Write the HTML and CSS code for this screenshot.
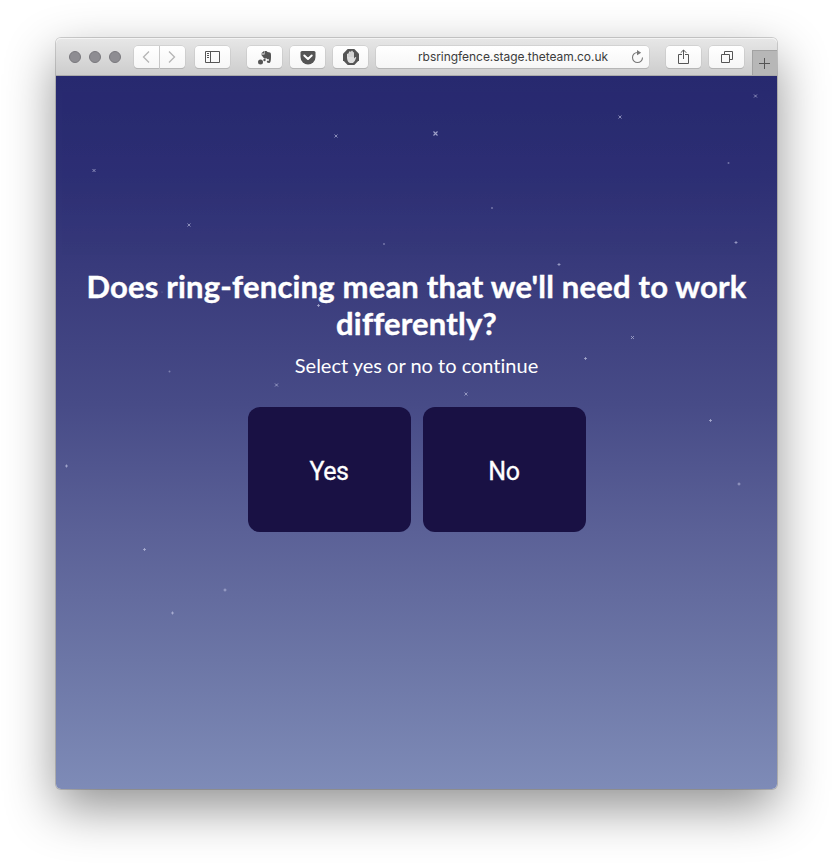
FILE: index.html
```
<!DOCTYPE html>
<html lang="en">
<head>
<meta charset="utf-8">
<title>Ring-fencing</title>
<link rel="stylesheet" href="styles.css">
</head>
<body>
<div class="window">
  <header class="toolbar">
    <div class="lights"><i></i><i></i><i></i></div>
    <div class="history">
      <span class="btn"><svg width="26" height="22" viewBox="0 0 26 22"><path d="M16 5.500 10.500 11 16 16.500" class="faint"/></svg></span>
      <span class="btn"><svg width="26" height="22" viewBox="0 0 26 22"><path d="M10 5.500 15.500 11 10 16.500" class="faint"/></svg></span>
    </div>
    <span class="btn sidebar"><svg width="36" height="22" viewBox="0 0 36 22"><path d="M10.500 5.500h14v11h-14zM15.500 5.500v11M12 7.500h2M12 9.500h2M12 11.500h2" class="line"/></svg></span>
    <div class="extensions">
      <span class="btn"><svg width="36" height="22" viewBox="0 0 36 22"><g fill="#555"><circle cx="13.500" cy="16" r="2.500"/><circle cx="17.500" cy="14" r="1.200"/><path d="M14 7.500 17 5v2.500zM17.500 5h2l1 1 2.500.5c1 .3 1 2 1 4 0 4-.3 6.500-2 6.500-1.800 0-2.500-1-2-2.300l2 .1-.3-2c-1 1-1.700.4-2-.5-1.200.4-3.200.2-3.500-1.100L14 8.500h3.500z"/></g></svg></span>
      <span class="btn"><svg width="36" height="22" viewBox="0 0 36 22"><path d="M12 5h12q1.500 0 1.500 1.500V11a7.500 7.500 0 0 1-15 0V6.500Q10.500 5 12 5z" fill="#555"/><path d="m14.300 9.500 3.700 3.500 3.700-3.500" fill="none" stroke="#fff" stroke-width="2" stroke-linecap="round" stroke-linejoin="round"/></svg></span>
      <span class="btn"><svg width="36" height="22" viewBox="0 0 36 22"><path d="M14.700 3h6.600L26 7.700v6.600L21.300 19h-6.600L10 14.300V7.700z" fill="#555"/><path d="M14 8v4q.5 4.500 3 5h3q2-1.500 3.300-5.500l-1-.5-1.300 1.500V6.200l-1 0-.5-1.400h-1L18 6l-1-.8-1 .5-.3 1.500z" fill="#ddd"/><path d="M16 7v4M18 6v5M20 6v5" stroke="#aaa" stroke-width=".4"/></svg></span>
    </div>
    <div class="btn address"><span>rbsringfence.stage.theteam.co.uk</span><svg class="reload" width="16" height="18" viewBox="0 0 16 18"><path d="M8.500 4.500A5 5 0 1 0 13.500 9.500" fill="none" stroke="#777" stroke-width="1.100"/><path d="m8 2 4.200 2.700L8 7.300z" fill="#777"/></svg></div>
    <div class="actions">
      <span class="btn"><svg width="36" height="22" viewBox="0 0 36 22"><path d="M16 8.500h-3.500v9h10v-9H19M17.500 13V4M14.700 6.800 17.500 4l2.800 2.800" class="line"/></svg></span>
      <span class="btn"><svg width="36" height="22" viewBox="0 0 36 22"><path d="M12.500 8.500h8v8h-8zM15.500 8.500v-3h8v8h-3" class="line"/></svg></span>
    </div>
    <span class="newtab"><svg width="24" height="25" viewBox="0 0 24 25"><path d="M6 12.500h11M11.500 7v11" stroke="#555"/></svg></span>
  </header>
  <main class="page">
    <svg class="sky" width="721" height="713" viewBox="56 76 721 713">
      <defs>
        <path id="x" d="M-1.500-1.500 1.500 1.500M1.500-1.500-1.500 1.500"/>
        <path id="p" d="M-1.500 0h3M0-1.500v3"/>
      </defs>
      <use href="#x" x="336" y="136"/><use href="#x" x="94" y="170.500"/><use href="#x" x="189" y="225"/>
      <use href="#x" x="620" y="117"/><use href="#x" x="755.500" y="96"/><use href="#x" x="276.500" y="385"/>
      <use href="#x" x="466" y="394"/><use href="#x" x="632.500" y="337.500"/>
      <path d="m433.500 131.500 4 4m0-4-4 4" stroke-width="1.100"/>
      <use href="#p" x="559" y="264.500"/><use href="#p" x="585.500" y="358.500"/><use href="#p" x="318.500" y="305.500"/>
      <use href="#p" x="710.500" y="420.500"/><use href="#p" x="66.500" y="466"/><use href="#p" x="739" y="484"/>
      <use href="#p" x="144.500" y="549.500"/><use href="#p" x="225" y="590"/><use href="#p" x="172.500" y="613"/>
      <use href="#p" x="736" y="242.500"/>
      <g class="dot"><circle cx="492" cy="208" r="1"/><circle cx="384" cy="244" r="1"/><circle cx="728.500" cy="163" r="1"/><circle cx="169.500" cy="371.500" r="1"/><circle cx="162" cy="292" r=".6"/></g>
    </svg>
    <h1><span class="l1">Does ring-fencing mean that we'll need to work</span> <span class="l2">differently?</span></h1>
    <p>Select yes or no to continue</p>
    <div class="choices">
      <button>Yes</button>
      <button>No</button>
    </div>
  </main>
</div>
</body>
</html>
```
FILE: styles.css
```
* { box-sizing: border-box; }
body {
  margin: 0;
  height: 863px;
  padding: 38px 56px 0;
  background: #fff;
  overflow: hidden;
}
svg { display: block; }
.window {
  width: 721px;
  height: 751px;
  border-radius: 5px;
  box-shadow: 0 0 0 1px rgba(0,0,0,.17), 0 19px 50px rgba(0,0,0,.43);
}
.toolbar {
  height: 38px;
  display: flex;
  align-items: flex-start;
  padding: 8px 0 0 13px;
  border-radius: 5px 5px 0 0;
  background: linear-gradient(#e7e7e7, #cdcdcd);
  border-bottom: 1px solid #aaa;
  box-shadow: inset 0 1px #f4f4f4;
}
.lights { display: flex; gap: 8px; padding-top: 5px; }
.lights i {
  width: 12px;
  height: 12px;
  border-radius: 50%;
  background: #8e8d92;
  border: 1px solid #79787d;
}
.btn {
  display: block;
  flex: none;
  height: 22px;
  border-radius: 4px;
  background: linear-gradient(#fff, #f6f6f6);
  box-shadow: 0 0 0 .5px #c2c2c2, 0 1px 0 #aaa;
}
.history { display: flex; margin-left: 13px; gap: 1px; }
.history .btn { width: 25px; }
.history .btn:first-child { border-radius: 4px 0 0 4px; }
.history .btn:last-child { border-radius: 0 4px 4px 0; }
.history svg { margin-left: -1px; }
.sidebar { margin-left: 10px; width: 35px; }
.extensions { display: flex; gap: 8px; margin-left: 17px; }
.extensions .btn, .actions .btn { width: 35px; }
.line { fill: none; stroke: #555; }
.faint { fill: none; stroke: #b5b5b5; stroke-width: 1.3; }
.address {
  width: 273px;
  margin-left: 8px;
  display: flex;
  justify-content: flex-end;
  align-items: center;
  gap: 21px;
  padding-right: 4px;
  font: 12px/22px Inter, sans-serif;
  letter-spacing: -.05px;
  color: #3c3c3c;
  white-space: nowrap;
}
.actions { display: flex; gap: 8px; margin-left: 17px; }
.newtab {
  width: 24px;
  height: 24px;
  margin: 5px 0 0 auto;
  background: #b7b7b7;
  box-shadow: 0 0 0 1px #a2a2a2;
  clip-path: inset(-1px 0 0 -1px);
}
.page {
  position: relative;
  height: 713px;
  padding-top: 192px;
  display: flex;
  flex-direction: column;
  align-items: center;
  overflow: hidden;
  border-radius: 0 0 5px 5px;
  background: linear-gradient(#27296f 0%, #2d2f74 14%, #3b3d7d 30%, #474b87 46%, #5b6197 64%, #6c76a6 82%, #7e8bb7 100%);
  color: #fff;
  font-family: Lato, sans-serif;
  font-variant-ligatures: none;
}
.sky {
  position: absolute;
  inset: 0;
  fill: none;
  stroke: #c9cbe8;
  stroke-width: .8;
  opacity: .75;
}
.dot { fill: #b0b2d4; stroke: none; opacity: .7; }
h1 {
  position: relative;
  margin: 0;
  font-size: 31px;
  line-height: 37px;
  font-weight: 700;
  letter-spacing: .19px;
  -webkit-text-stroke: .4px #fff;
  text-align: center;
  white-space: nowrap;
}
h1 span { display: block; }
p {
  position: relative;
  margin: 11px 0 0;
  font-size: 20px;
  line-height: 24px;
}
.choices { position: relative; display: flex; gap: 12px; margin-top: 30px; }
button {
  width: 163px;
  height: 125px;
  padding: 3px 0 0;
  border: 0;
  border-radius: 12px;
  background: #191144;
  color: #fff;
  font: 25px Roboto, sans-serif;
  letter-spacing: -.4px;
  -webkit-text-stroke: .3px #fff;
}
```
